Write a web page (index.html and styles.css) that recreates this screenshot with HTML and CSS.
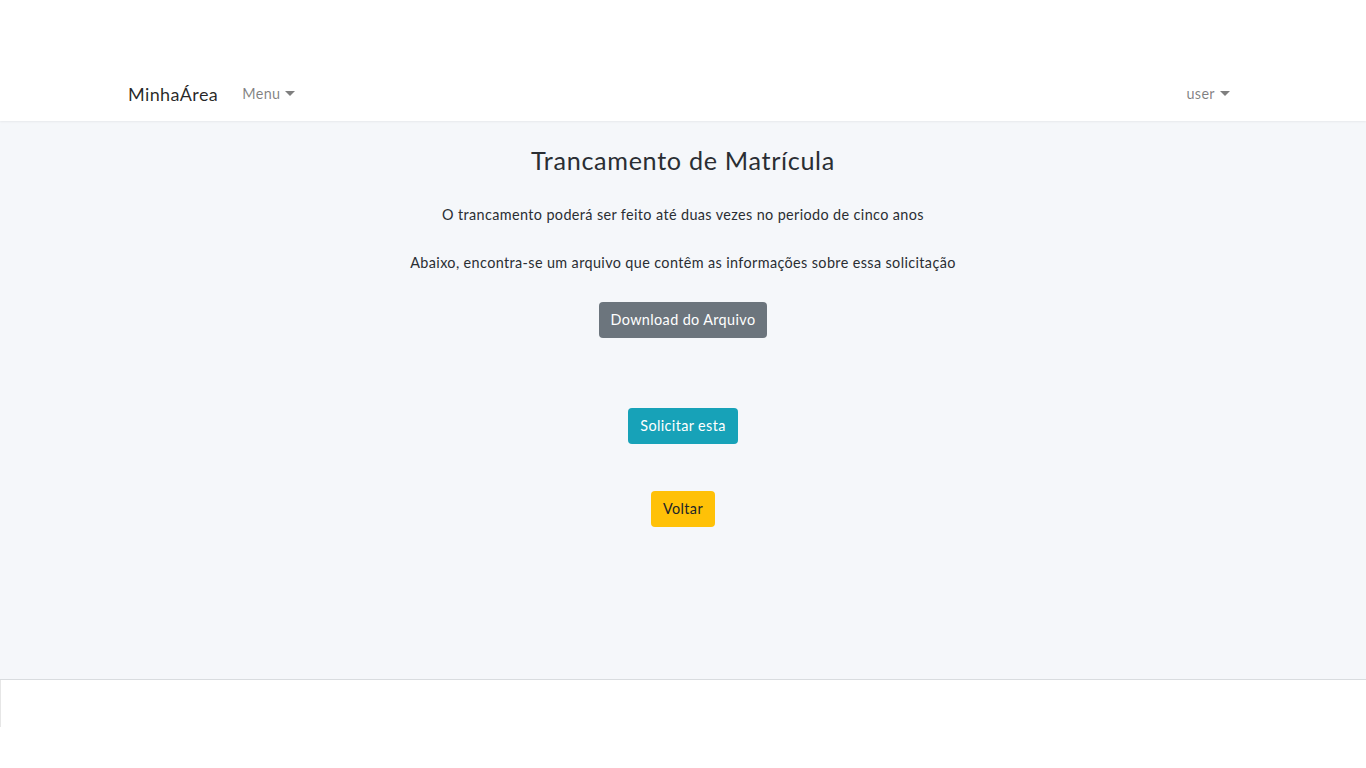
FILE: index.html
```html
<!DOCTYPE html>
<html lang="pt-BR">
<head>
<meta charset="utf-8">
<title>MinhaÁrea</title>
<link rel="stylesheet" href="styles.css">
</head>
<body>
<header class="site-header">
  <nav class="navbar">
    <div class="container nav-inner">
      <div class="nav-left">
        <a class="brand" href="#">MinhaÁrea</a>
        <a class="nav-link" href="#">Menu <span class="caret"></span></a>
      </div>
      <a class="nav-link" href="#">user <span class="caret"></span></a>
    </div>
  </nav>
</header>
<main class="main">
  <h3 class="title">Trancamento de Matrícula</h3>
  <p class="text t1">O trancamento poderá ser feito até duas vezes no periodo de cinco anos</p>
  <p class="text t2">Abaixo, encontra-se um arquivo que contêm as informações sobre essa solicitação</p>
  <a class="btn btn-secondary" href="#">Download do Arquivo</a>
  <a class="btn btn-info" href="#">Solicitar esta</a>
  <a class="btn btn-warning" href="#">Voltar</a>
</main>
<footer class="footer">
  <div class="footer-box"></div>
</footer>
</body>
</html>
```

FILE: styles.css
```css
* { box-sizing: border-box; }
html, body { margin: 0; padding: 0; }
body {
  font-family: "Lato", "Noto Sans", sans-serif;
  font-size: 14.4px;
  line-height: 1.6;
  letter-spacing: 0.38px;
  color: #2a2e33;
  background: #fff;
}
a { text-decoration: none; }
.site-header {
  background: #fff;
  padding-top: 65px;
  position: relative;
  z-index: 1;
  box-shadow: 0 1px 2px rgba(0,0,0,.06);
}
.navbar { height: 56px; }
.container {
  width: 1140px;
  margin: 0 auto;
  padding: 0 15px;
}
.nav-inner {
  height: 100%;
  display: flex;
  align-items: center;
  justify-content: space-between;
  padding-top: 2px;
}
.nav-left { display: flex; align-items: center; }
.brand {
  font-size: 18px;
  color: rgba(0,0,0,.85);
  margin-right: 16px;
  line-height: 1;
}
.nav-link {
  color: rgba(0,0,0,.5);
  padding: 8px;
  display: inline-flex;
  align-items: center;
  font-size: 14.4px;
}
.caret {
  display: inline-block;
  margin-left: 5px;
  border-top: 5px solid rgba(0,0,0,.5);
  border-left: 5px solid transparent;
  border-right: 5px solid transparent;
  width: 0; height: 0;
}
.main {
  background: #f5f7fa;
  height: 559px;
  display: flex;
  flex-direction: column;
  align-items: center;
  padding-top: 24px;
  border-bottom: 1px solid #d9dcdf;
}
.title {
  margin: 0;
  font-weight: 400;
  font-size: 25.2px;
  line-height: 30px;
  letter-spacing: 0.67px;
}
.text { margin: 0; line-height: 23px; }
.t1 { margin-top: 28px; }
.t2 { margin-top: 25px; }
.btn {
  display: inline-block;
  height: 36px;
  line-height: 36px;
  padding: 0 12px;
  border-radius: 4px;
  font-size: 14.4px;
  color: #fff;
}
.btn-secondary { background: #6c757d; margin-top: 28px; }
.btn-info { background: #17a2b8; margin-top: 70px; }
.btn-warning { background: #ffc107; color: #212529; margin-top: 47px; }
.footer { background: #fff; height: 88px; }
.footer-box {
  width: 2px;
  height: 47px;
  border-left: 1px solid #e6e6e6;
}
```
